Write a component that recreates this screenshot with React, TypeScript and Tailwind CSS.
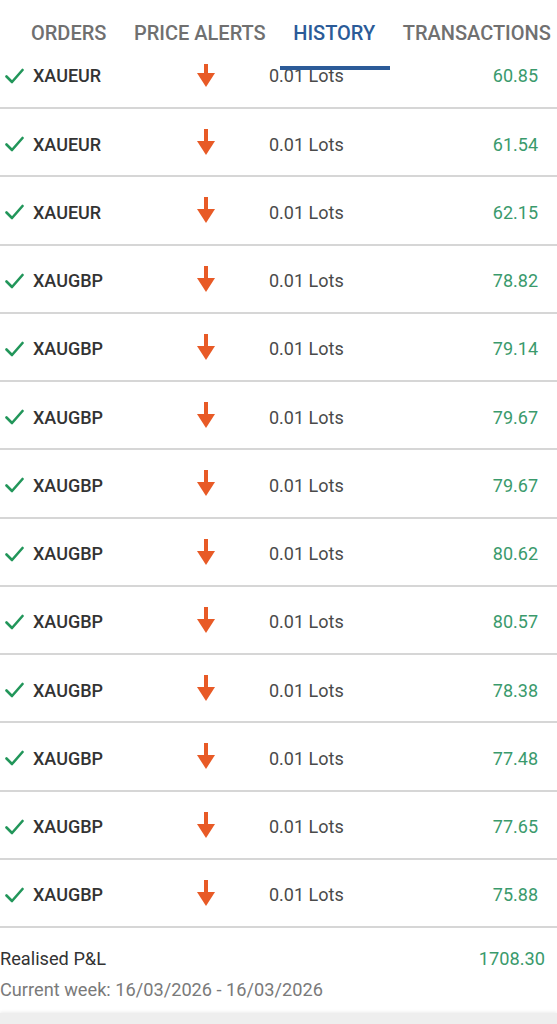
import React from "react";

type Trade = {
  symbol: string;
  lots: string;
  profit: string;
};

const trades: Trade[] = [
  { symbol: "XAUEUR", lots: "0.01 Lots", profit: "60.85" },
  { symbol: "XAUEUR", lots: "0.01 Lots", profit: "61.54" },
  { symbol: "XAUEUR", lots: "0.01 Lots", profit: "62.15" },
  { symbol: "XAUGBP", lots: "0.01 Lots", profit: "78.82" },
  { symbol: "XAUGBP", lots: "0.01 Lots", profit: "79.14" },
  { symbol: "XAUGBP", lots: "0.01 Lots", profit: "79.67" },
  { symbol: "XAUGBP", lots: "0.01 Lots", profit: "79.67" },
  { symbol: "XAUGBP", lots: "0.01 Lots", profit: "80.62" },
  { symbol: "XAUGBP", lots: "0.01 Lots", profit: "80.57" },
  { symbol: "XAUGBP", lots: "0.01 Lots", profit: "78.38" },
  { symbol: "XAUGBP", lots: "0.01 Lots", profit: "77.48" },
  { symbol: "XAUGBP", lots: "0.01 Lots", profit: "77.65" },
  { symbol: "XAUGBP", lots: "0.01 Lots", profit: "75.88" },
];

const tabs = ["ORDERS", "PRICE ALERTS", "HISTORY", "TRANSACTIONS"];

const CheckIcon = () => (
  <svg width="19" height="16" viewBox="0 0 19 16" fill="none">
    <path
      d="M1.5 8.5 L7 14 L17.5 2"
      stroke="#22965a"
      strokeWidth="2.6"
      strokeLinecap="round"
      strokeLinejoin="round"
    />
  </svg>
);

const SellArrow = () => (
  <svg width="18" height="26" viewBox="0 0 18 26">
    <rect x="7" y="0" width="4" height="14" fill="#e85a26" />
    <polygon points="0,12 18,12 9,26" fill="#e85a26" />
  </svg>
);

const TradeRow = ({ trade }: { trade: Trade }) => (
  <div className="h-[68.25px] border-b-2 border-[#d6d6d6] flex items-center pt-[4px] text-[18px]">
    <div className="w-[197px] flex items-center pl-[5px] gap-[9px]">
      <CheckIcon />
      <span className="font-medium text-[#333333]">{trade.symbol}</span>
    </div>
    <div className="w-[18px] flex justify-center -mt-[4px]">
      <SellArrow />
    </div>
    <div className="w-[54px]" />
    <div className="flex-1 text-[#4a4a4a]">{trade.lots}</div>
    <div className="pr-[19px] text-[#3a9a6c]">{trade.profit}</div>
  </div>
);

export default function App() {
  return (
    <div className="h-[1024px] w-[557px] overflow-hidden bg-white flex flex-col font-['Roboto',_'Liberation_Sans',_sans-serif]">
      <div className="relative z-10 h-[64px] shrink-0 bg-white">
        <div className="flex gap-[27.5px] pl-[31px] pt-[20px] whitespace-nowrap text-[20px] font-medium leading-[26px]">
          {tabs.map((tab) => (
            <span
              key={tab}
              className={tab === "HISTORY" ? "text-[#2b5b98]" : "text-[#707070]"}
            >
              {tab}
            </span>
          ))}
        </div>
        <div className="absolute left-[280px] top-[66px] h-[4px] w-[110px] bg-[#2b5b98]" />
      </div>

      <div className="-mt-[23.25px]">
        {trades.map((trade, i) => (
          <TradeRow key={i} trade={trade} />
        ))}
      </div>

      <div className="pt-[19px] flex-1">
        <div className="flex justify-between items-center text-[18.2px] leading-[24px]">
          <span className="text-[#333333]">Realised P&amp;L</span>
          <span className="pr-[12px] text-[#3a9a6c]">1708.30</span>
        </div>
        <div className="mt-[7px] text-[18.2px] leading-[24px] text-[#7a7a7a]">
          Current week: 16/03/2026 - 16/03/2026
        </div>
      </div>

      <div className="h-[11px] shrink-0 bg-[#eeeeee] shadow-[0_-1px_3px_rgba(0,0,0,0.08)]" />
    </div>
  );
}
